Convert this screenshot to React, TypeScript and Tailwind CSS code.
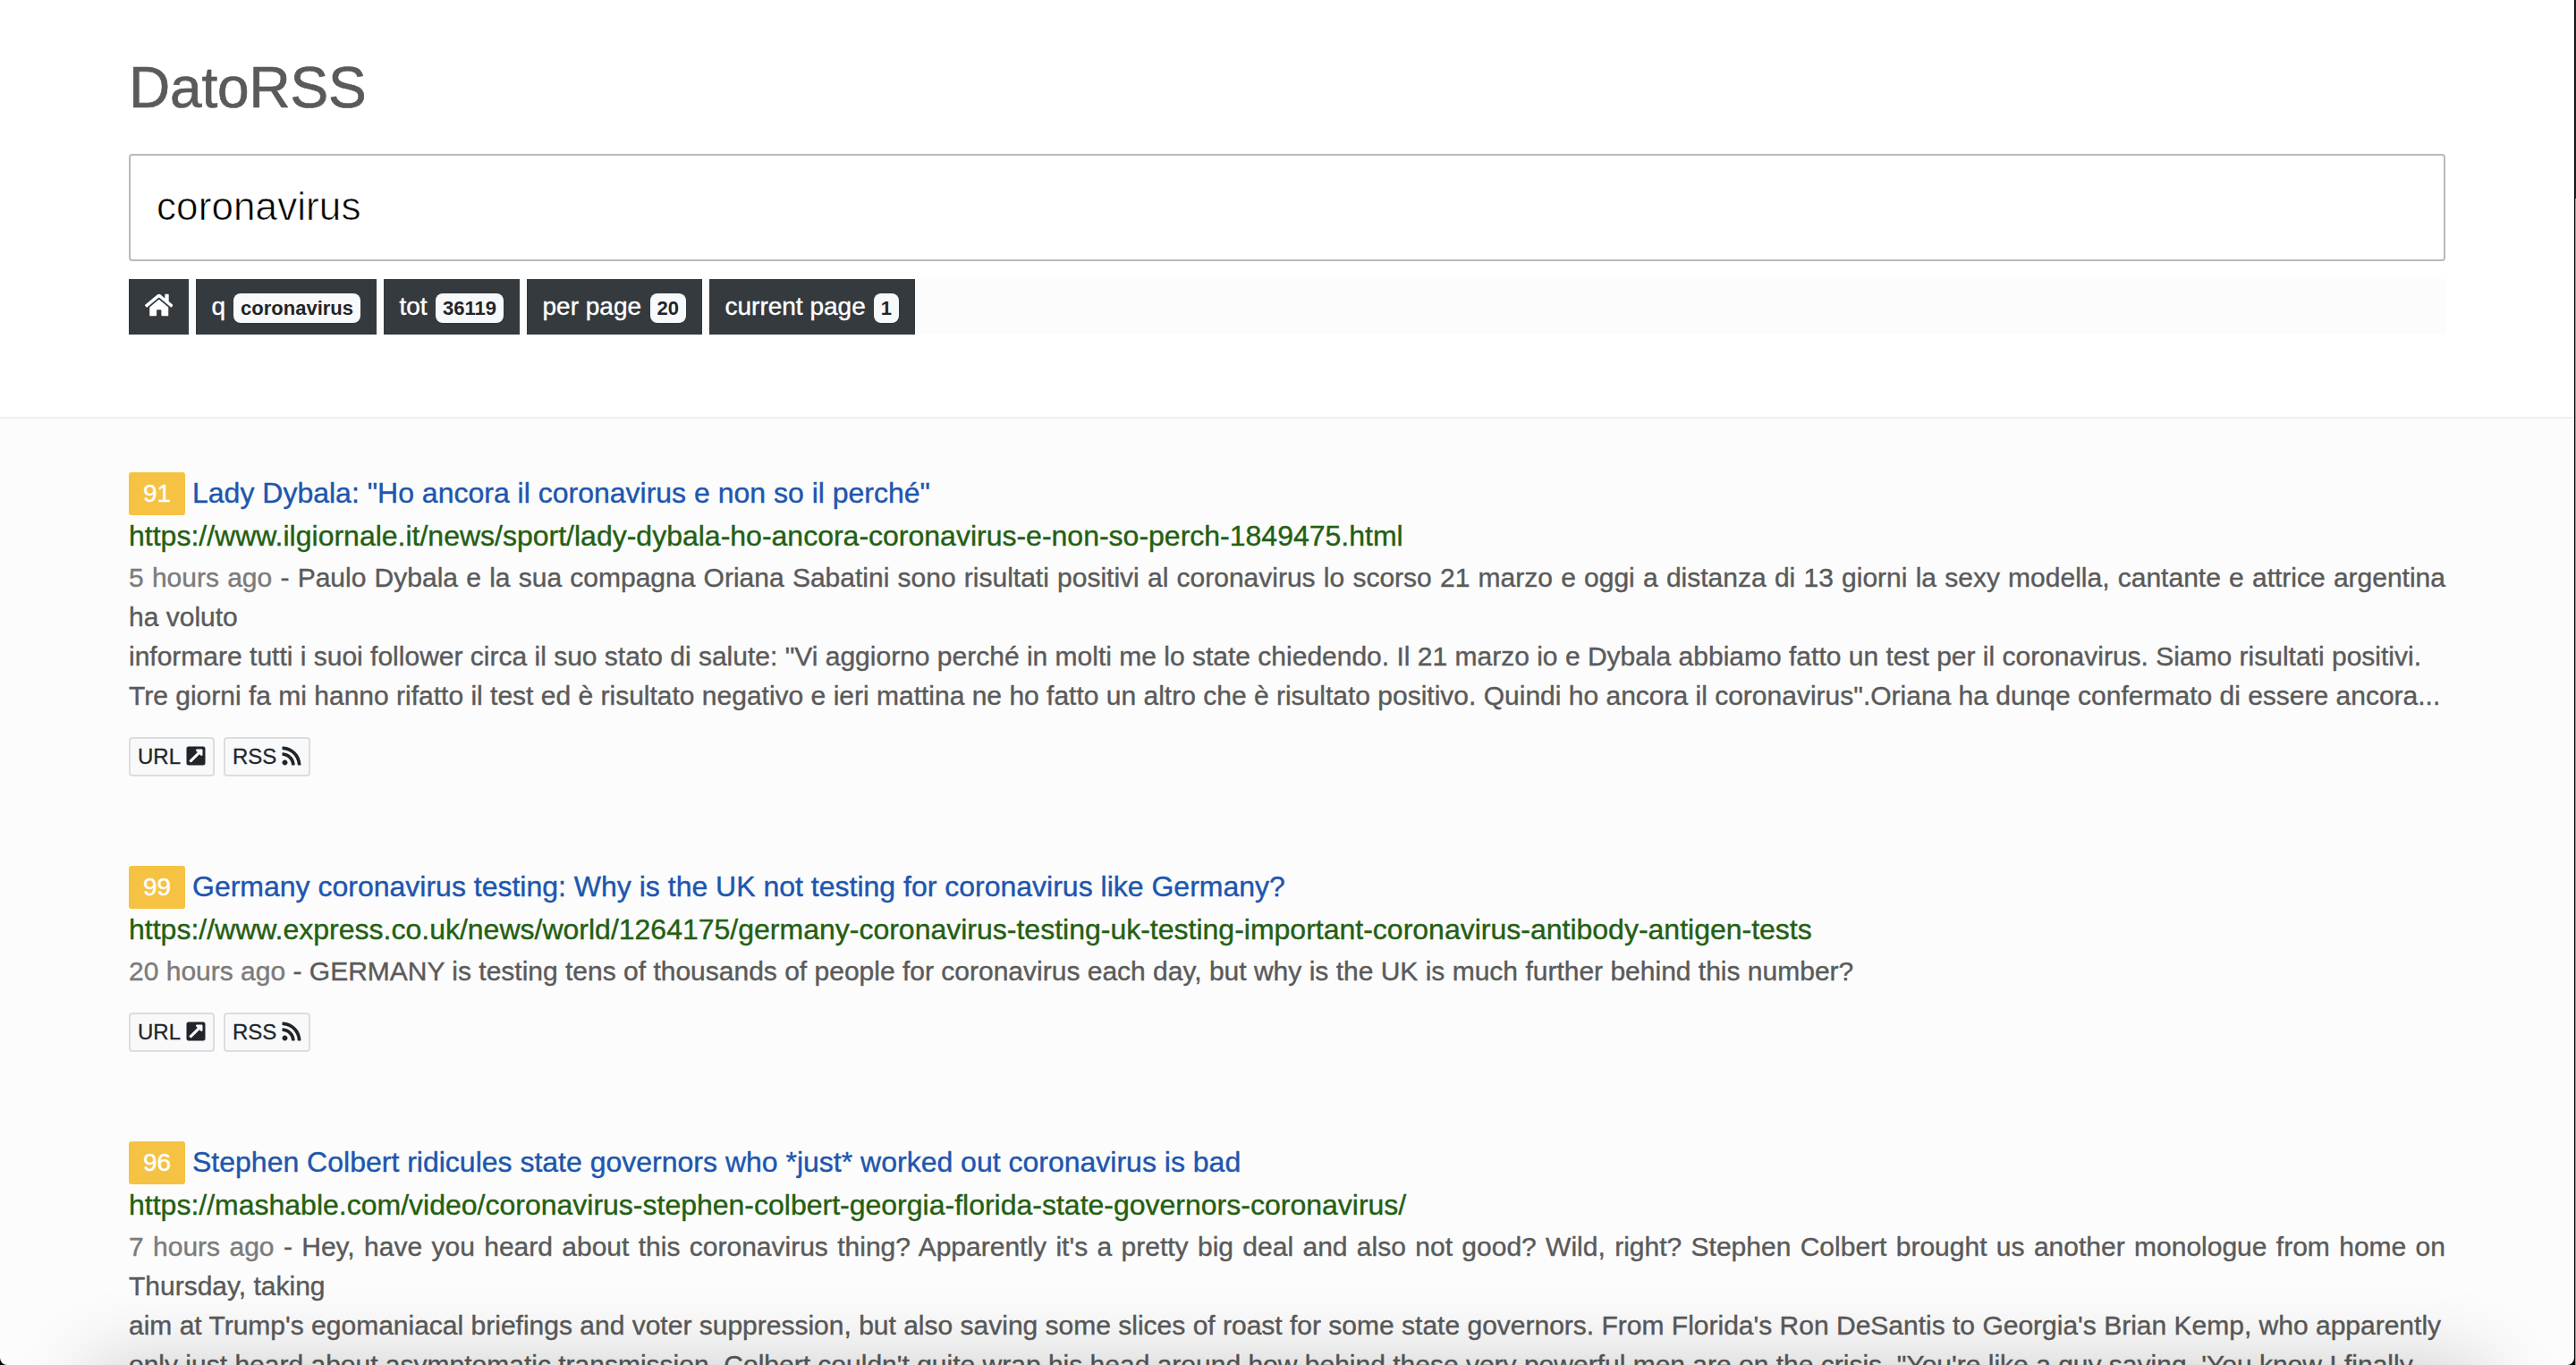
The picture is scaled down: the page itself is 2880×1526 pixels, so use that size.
import type { ReactNode } from "react";
import { FaExternalLinkSquareAlt, FaHome, FaRss } from "react-icons/fa";

type Result = {
  score: number;
  title: string;
  url: string;
  age: string;
  lines: string[];
};

const results: Result[] = [
  {
    score: 91,
    title: 'Lady Dybala: "Ho ancora il coronavirus e non so il perché"',
    url: "https://www.ilgiornale.it/news/sport/lady-dybala-ho-ancora-coronavirus-e-non-so-perch-1849475.html",
    age: "5 hours ago",
    lines: [
      "Paulo Dybala e la sua compagna Oriana Sabatini sono risultati positivi al coronavirus lo scorso 21 marzo e oggi a distanza di 13 giorni la sexy modella, cantante e attrice argentina ha voluto",
      'informare tutti i suoi follower circa il suo stato di salute: "Vi aggiorno perché in molti me lo state chiedendo. Il 21 marzo io e Dybala abbiamo fatto un test per il coronavirus. Siamo risultati positivi.',
      'Tre giorni fa mi hanno rifatto il test ed è risultato negativo e ieri mattina ne ho fatto un altro che è risultato positivo. Quindi ho ancora il coronavirus".Oriana ha dunqe confermato di essere ancora...',
    ],
  },
  {
    score: 99,
    title: "Germany coronavirus testing: Why is the UK not testing for coronavirus like Germany?",
    url: "https://www.express.co.uk/news/world/1264175/germany-coronavirus-testing-uk-testing-important-coronavirus-antibody-antigen-tests",
    age: "20 hours ago",
    lines: [
      "GERMANY is testing tens of thousands of people for coronavirus each day, but why is the UK is much further behind this number?",
    ],
  },
  {
    score: 96,
    title: "Stephen Colbert ridicules state governors who *just* worked out coronavirus is bad",
    url: "https://mashable.com/video/coronavirus-stephen-colbert-georgia-florida-state-governors-coronavirus/",
    age: "7 hours ago",
    lines: [
      "Hey, have you heard about this coronavirus thing? Apparently it's a pretty big deal and also not good? Wild, right? Stephen Colbert brought us another monologue from home on Thursday, taking",
      "aim at Trump's egomaniacal briefings and voter suppression, but also saving some slices of roast for some state governors. From Florida's Ron DeSantis to Georgia's Brian Kemp, who apparently",
      "only just heard about asymptomatic transmission, Colbert couldn't quite wrap his head around how behind these very powerful men are on the crisis. \"You're like a guy saying, 'You know I finally",
    ],
  },
];

function Tag({ label, value, width }: { label: string; value: string; width: string }) {
  return (
    <div className={`flex h-full items-center justify-between bg-[#343a3e] pr-[18px] pl-[17.5px] text-[28px] leading-[62px] text-white ${width}`}>
      <span className="[-webkit-text-stroke:0.4px]">{label}</span>
      <span className="mt-[3px] h-[33px] rounded-lg bg-[#f8f9fa] px-2 text-[22px] leading-[33px] font-bold text-[#212529]">
        {value}
      </span>
    </div>
  );
}

function SmallButton({ children, width }: { children: ReactNode; width: string }) {
  return (
    <a className={`flex h-11 items-center gap-[5px] rounded-[4px] border-2 border-[#dddddd] bg-[#f8f9fa] pl-2 text-[24px] leading-10 text-[#212529] [-webkit-text-stroke:0.3px] ${width}`}>
      {children}
    </a>
  );
}

function ResultItem({ item }: { item: Result }) {
  return (
    <article className="[-webkit-text-stroke:0.4px]">
      <div className="flex h-12 items-start gap-2">
        <span className="h-12 w-[63px] rounded-[3px] bg-[#f6c244] text-center text-[28px] leading-[48px] text-white">
          {item.score}
        </span>
        <a className="text-[32px] leading-[46px] text-[#1d56ae]">{item.title}</a>
      </div>
      <div className="h-12 text-[32px] leading-[46px] text-[#245f12]">{item.url}</div>
      <p className="text-justify text-[30px] leading-[44px] text-[#5a5a5a]">
        <span className="text-[#7b7b7b]">{item.age}</span>
        {" - "}
        {item.lines.map((line, i) => (
          <span key={i}>
            {i > 0 && <br />}
            {line}
          </span>
        ))}
      </p>
      <div className="mt-6 flex gap-[10px]">
        <SmallButton width="w-24">
          URL <FaExternalLinkSquareAlt className="mb-[2px]" />
        </SmallButton>
        <SmallButton width="w-[97px]">
          RSS <FaRss className="mb-[2px]" />
        </SmallButton>
      </div>
    </article>
  );
}

export default function App() {
  return (
    <div className="relative flex h-[1526px] w-[2880px] overflow-hidden bg-black font-['Liberation_Sans',Arial,sans-serif]">
      <div className="relative h-full w-[2878px] overflow-hidden rounded-b-[8px] bg-[#fcfcfc]">
        <header className="h-[468px] border-b-2 border-[#eeeeee] bg-white pt-[60px] pr-[144px] pl-[144px]">
          <h1 className="h-[76px] text-[64px] leading-[76px] tracking-[-0.2px] text-[#5a5a5a] [-webkit-text-stroke:0.7px]">
            DatoRSS
          </h1>
          <div className="mt-9 h-[120px] rounded-[4px] border-2 border-[#b9b9b9] bg-white pl-[29px] text-[44px] leading-[114px] tracking-[0.1px] text-black [-webkit-text-stroke:0.7px_white]">
            coronavirus
          </div>
          <nav className="mt-5 flex h-[62px] gap-2 bg-[#fcfcfc]">
            <div className="flex h-full w-[67px] items-center justify-center bg-[#343a3e] pb-1 text-white">
              <FaHome className="h-7 w-[31.5px]" />
            </div>
            <Tag label="q" value="coronavirus" width="w-[202px]" />
            <Tag label="tot" value="36119" width="w-[152px]" />
            <Tag label="per page" value="20" width="w-[196px]" />
            <Tag label="current page" value="1" width="w-[230px]" />
          </nav>
        </header>
        <main className="flex flex-col gap-[100px] pt-[60px] pr-[144px] pl-[144px]">
          {results.map((item) => (
            <ResultItem key={item.score} item={item} />
          ))}
        </main>
        <div className="absolute top-full right-[98px] left-[100px] h-40 shadow-[0_0_90px_rgba(0,0,0,0.2)]" />
      </div>
      <div className="ml-px flex h-full w-px flex-col">
        <div className="h-[222px] bg-[#222222]" />
        <div className="flex-1 bg-[#999999]" />
      </div>
    </div>
  );
}
